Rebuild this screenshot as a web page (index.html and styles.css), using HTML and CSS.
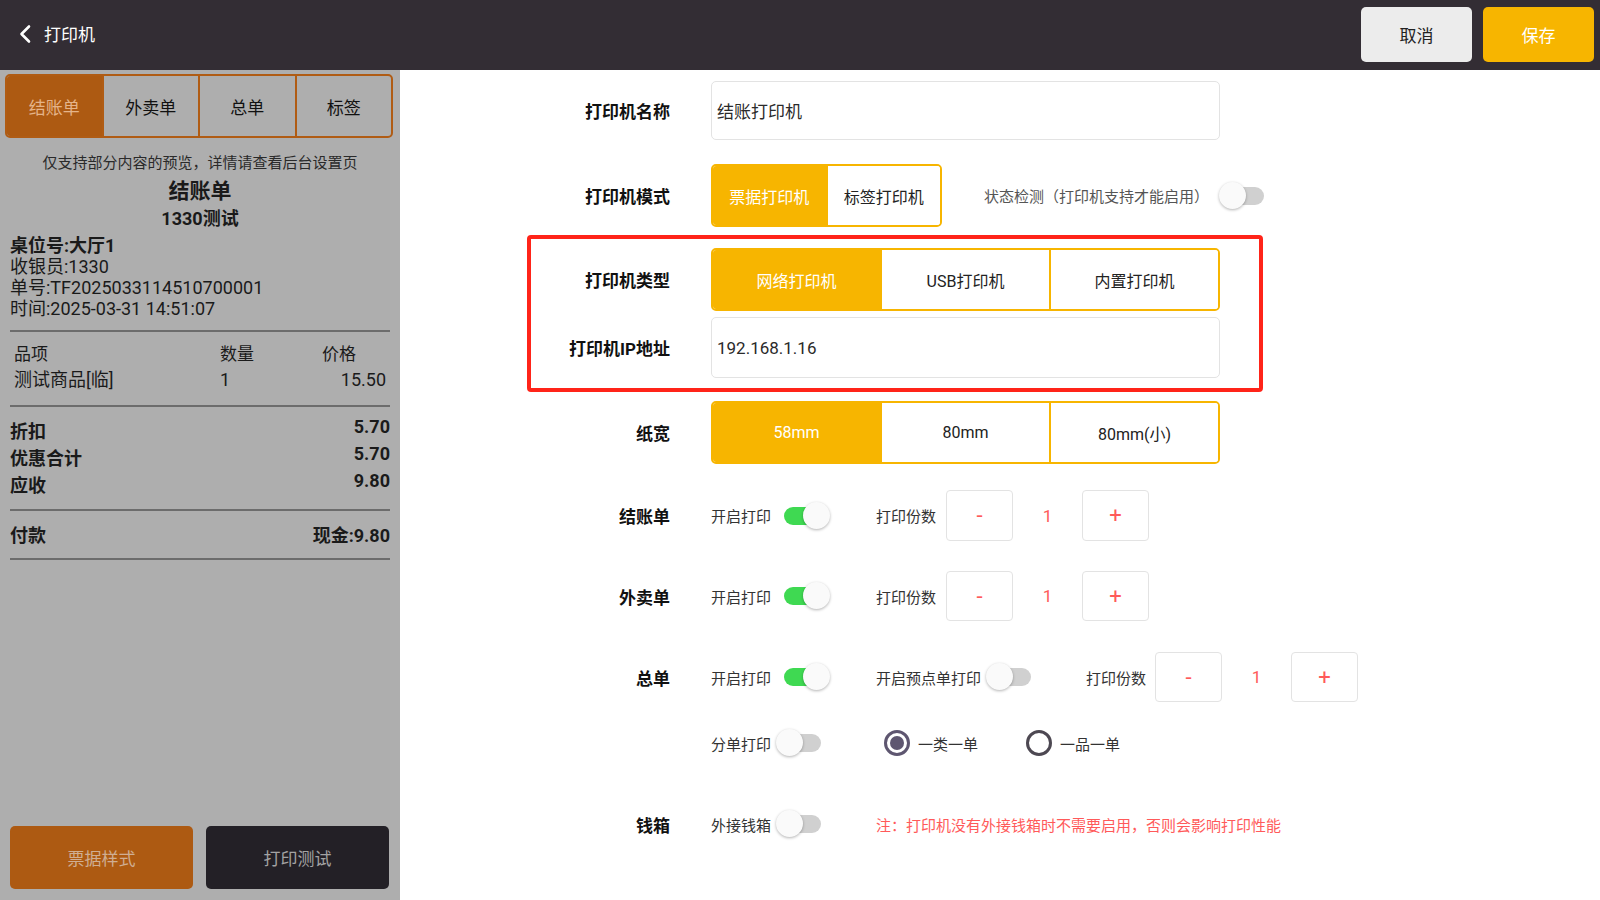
FILE: index.html
```html
<!DOCTYPE html>
<html lang="zh-CN">
<head>
    <meta charset="UTF-8">
    <meta name="viewport" content="width=device-width, initial-scale=1.0">
    <title>打印机</title>
    <link rel="stylesheet" href="styles.css">
</head>
<body>
    <div class="topbar">
        <div class="topbar-title">
            <svg class="back-icon" viewBox="0 0 14 20" width="14" height="20">
                <path d="M11 2.5 L3.5 10 L11 17.5" fill="none" stroke="#fff" stroke-width="2.6" stroke-linecap="round" stroke-linejoin="round"/>
            </svg>
            <span>打印机</span>
        </div>
        <div class="topbar-actions">
            <button class="btn btn-cancel">取消</button>
            <button class="btn btn-save">保存</button>
        </div>
    </div>

    <div class="main">
        <aside class="preview">
            <div class="ticket-tabs">
                <div class="ticket-tab active">结账单</div>
                <div class="ticket-tab">外卖单</div>
                <div class="ticket-tab">总单</div>
                <div class="ticket-tab">标签</div>
            </div>

            <div class="ticket">
                <p class="notice">仅支持部分内容的预览，详情请查看后台设置页</p>
                <h2 class="ticket-title">结账单</h2>
                <h3 class="ticket-shop">1330测试</h3>
                <div class="ticket-info">
                    <p class="strong">桌位号:大厅1</p>
                    <p>收银员:1330</p>
                    <p>单号:TF2025033114510700001</p>
                    <p>时间:2025-03-31 14:51:07</p>
                </div>
                <hr>
                <div class="ticket-items">
                    <div class="item-row head">
                        <span class="c-name">品项</span>
                        <span class="c-qty">数量</span>
                        <span class="c-price">价格</span>
                    </div>
                    <div class="item-row">
                        <span class="c-name">测试商品[临]</span>
                        <span class="c-qty">1</span>
                        <span class="c-price">15.50</span>
                    </div>
                </div>
                <hr>
                <div class="ticket-sums">
                    <div class="sum-row"><span>折扣</span><span class="sum-value">5.70</span></div>
                    <div class="sum-row"><span>优惠合计</span><span class="sum-value">5.70</span></div>
                    <div class="sum-row"><span>应收</span><span class="sum-value">9.80</span></div>
                </div>
                <hr>
                <div class="ticket-pay">
                    <span>付款</span><span>现金:9.80</span>
                </div>
                <hr>
            </div>

            <div class="preview-actions">
                <button class="pbtn pbtn-style">票据样式</button>
                <button class="pbtn pbtn-test">打印测试</button>
            </div>
        </aside>

        <section class="form">
            <div class="row row-name">
                <div class="row-label">打印机名称</div>
                <div class="text-input">结账打印机</div>
            </div>

            <div class="row row-mode">
                <div class="row-label">打印机模式</div>
                <div class="segment segment-2">
                    <div class="segment-item active">票据打印机</div>
                    <div class="segment-item">标签打印机</div>
                </div>
                <div class="status-check">
                    状态检测（打印机支持才能启用）
                    <span class="switch"></span>
                </div>
            </div>

            <div class="row row-type">
                <div class="row-label">打印机类型</div>
                <div class="segment">
                    <div class="segment-item active">网络打印机</div>
                    <div class="segment-item">USB打印机</div>
                    <div class="segment-item">内置打印机</div>
                </div>
            </div>

            <div class="row row-ip">
                <div class="row-label">打印机IP地址</div>
                <div class="text-input">192.168.1.16</div>
            </div>

            <div class="row row-paper">
                <div class="row-label">纸宽</div>
                <div class="segment">
                    <div class="segment-item active">58mm</div>
                    <div class="segment-item">80mm</div>
                    <div class="segment-item">80mm(小)</div>
                </div>
            </div>

            <div class="row row-bill">
                <div class="row-label">结账单</div>
                <div class="opt-col1">开启打印<span class="switch on"></span></div>
                <div class="opt">打印份数
                    <div class="stepper">
                        <div class="step-btn">-</div>
                        <div class="step-value">1</div>
                        <div class="step-btn">+</div>
                    </div>
                </div>
            </div>

            <div class="row row-takeout">
                <div class="row-label">外卖单</div>
                <div class="opt-col1">开启打印<span class="switch on"></span></div>
                <div class="opt">打印份数
                    <div class="stepper">
                        <div class="step-btn">-</div>
                        <div class="step-value">1</div>
                        <div class="step-btn">+</div>
                    </div>
                </div>
            </div>

            <div class="row row-total">
                <div class="row-label">总单</div>
                <div class="opt-col1">开启打印<span class="switch on"></span></div>
                <div class="opt-col2">开启预点单打印<span class="switch"></span></div>
                <div class="opt">打印份数
                    <div class="stepper stepper-tight">
                        <div class="step-btn">-</div>
                        <div class="step-value">1</div>
                        <div class="step-btn">+</div>
                    </div>
                </div>
            </div>

            <div class="row row-split">
                <div class="row-label"></div>
                <div class="opt-col1">分单打印<span class="switch"></span></div>
                <div class="radio-group">
                    <div class="radio-option"><span class="radio checked"></span>一类一单</div>
                    <div class="radio-option"><span class="radio"></span>一品一单</div>
                </div>
            </div>

            <div class="row row-cash">
                <div class="row-label">钱箱</div>
                <div class="opt-col1">外接钱箱<span class="switch"></span></div>
                <div class="cash-note">注：打印机没有外接钱箱时不需要启用，否则会影响打印性能</div>
            </div>

            <div class="highlight"></div>
        </section>
    </div>
</body>
</html>
```

FILE: styles.css
```css
:root {
    --yellow: #f7b500;
    --orange: #ad5a12;
    --dark: #332d34;
    --red-text: #ff5a5a;
    --border-light: #e3e3e3;
}

* {
    margin: 0;
    padding: 0;
    box-sizing: border-box;
}

body {
    width: 1600px;
    height: 900px;
    overflow: hidden;
    font-family: Roboto, "Noto Sans CJK SC", sans-serif;
    color: #222;
    background: #fff;
}

button {
    font-family: inherit;
    border: none;
    cursor: pointer;
}

/* top bar */
.topbar {
    height: 70px;
    background: var(--dark);
    display: flex;
    align-items: center;
    justify-content: space-between;
    padding: 0 6px 0 18px;
}

.topbar-title {
    display: flex;
    align-items: center;
    padding-bottom: 3px;
    color: #fff;
    font-size: 17px;
}

.back-icon {
    margin-right: 12px;
}

.topbar-actions {
    display: flex;
    gap: 11px;
    padding-bottom: 1px;
}

.btn {
    width: 111px;
    height: 55px;
    border-radius: 5px;
    font-size: 17px;
}

.btn-cancel {
    background: #ececec;
    color: #222;
}

.btn-save {
    background: var(--yellow);
    color: #fff;
}

.main {
    display: flex;
    height: 830px;
}

/* left preview */
.preview {
    width: 400px;
    background: #aeaeae;
    display: flex;
    flex-direction: column;
}

.ticket-tabs {
    display: flex;
    height: 64px;
    margin: 4px 7px 0 5px;
    border: 2px solid #b05c14;
    border-radius: 5px;
    overflow: hidden;
}

.ticket-tab {
    flex: 1;
    display: flex;
    align-items: center;
    justify-content: center;
    font-size: 17px;
    color: #111;
    border-left: 2px solid #b05c14;
}

.ticket-tab:first-child {
    border-left: none;
}

.ticket-tab.active {
    background: var(--orange);
    color: #e4b48a;
}

.ticket {
    padding: 0 10px;
    color: #1a1a1a;
}

.notice {
    margin-top: 15px;
    font-size: 15px;
    line-height: 20px;
    text-align: center;
    color: #2a2a2a;
}

.ticket-title {
    margin-top: 5px;
    font-size: 21px;
    line-height: 26px;
    text-align: center;
}

.ticket-shop {
    margin-top: 3px;
    font-size: 18px;
    line-height: 24px;
    text-align: center;
}

.ticket-info {
    margin-top: 4px;
    font-size: 18px;
    line-height: 21px;
}

.ticket-info .strong {
    font-weight: 700;
}

.ticket hr {
    border: none;
    height: 2px;
    background: #6c6c6c;
}

.ticket-info + hr {
    margin-top: 11px;
}

.ticket-items {
    margin-top: 9px;
    font-size: 18px;
    line-height: 26px;
}

.ticket-items + hr {
    margin-top: 12px;
}

.item-row {
    display: flex;
    padding: 0 4px;
}

.item-row.head {
    font-size: 17px;
}

.c-name {
    width: 206px;
}

.c-qty {
    flex: 1;
}

.item-row.head .c-price {
    padding-right: 30px;
}

.ticket-sums {
    margin-top: 11px;
    font-size: 18px;
    font-weight: 700;
}

.ticket-sums + hr {
    margin-top: 10px;
}

.sum-row {
    display: flex;
    justify-content: space-between;
    align-items: flex-start;
    line-height: 27px;
}

.sum-value {
    line-height: 17px;
}

.ticket-pay {
    margin-top: 11px;
    display: flex;
    justify-content: space-between;
    font-size: 18px;
    font-weight: 700;
    line-height: 27px;
}

.ticket-pay + hr {
    margin-top: 9px;
}

.preview-actions {
    margin-top: auto;
    display: flex;
    gap: 13px;
    padding: 0 11px 11px 10px;
}

.pbtn {
    flex: 1;
    height: 63px;
    border-radius: 5px;
    font-size: 17px;
}

.pbtn-style {
    background: var(--orange);
    color: #cfae93;
}

.pbtn-test {
    background: #232026;
    color: #a3a3a3;
}

/* right form */
.form {
    flex: 1;
    position: relative;
    background: #fff;
}

.row {
    display: flex;
    align-items: center;
    font-size: 15px;
    color: #333;
}

.row-label {
    width: 270px;
    margin-right: 41px;
    text-align: right;
    font-size: 17px;
    font-weight: 700;
    color: #111;
}

.row-name { margin-top: 11px; height: 59px; }
.row-mode { margin-top: 24px; height: 63px; }
.row-type { margin-top: 21px; height: 63px; }
.row-ip { margin-top: 6px; height: 61px; }
.row-paper { margin-top: 23px; height: 63px; }
.row-bill { margin-top: 26px; height: 51px; }
.row-takeout { margin-top: 30px; height: 50px; }
.row-total { margin-top: 31px; height: 50px; }
.row-split { margin-top: 21px; height: 40px; }
.row-cash { margin-top: 41px; height: 40px; }

.text-input {
    width: 509px;
    height: 100%;
    border: 1px solid var(--border-light);
    border-radius: 5px;
    padding-left: 5px;
    display: flex;
    align-items: center;
    font-size: 17px;
    color: #2a2a2a;
}

.segment {
    display: flex;
    width: 509px;
    height: 63px;
    border: 2px solid var(--yellow);
    border-radius: 5px;
    overflow: hidden;
}

.segment-2 {
    width: 231px;
}

.segment-item {
    flex: 1;
    display: flex;
    align-items: center;
    justify-content: center;
    font-size: 16px;
    color: #222;
    background: #fff;
    border-left: 2px solid var(--yellow);
}

.segment-item:first-child {
    border-left: none;
}

.segment-item.active {
    background: var(--yellow);
    color: #fff;
}

.status-check {
    display: flex;
    align-items: center;
    margin-left: 42px;
    color: #555;
}

.status-check .switch {
    margin-left: 10px;
}

/* switch */
.switch {
    position: relative;
    display: inline-block;
    flex: none;
    width: 54px;
    height: 28px;
    margin-left: 5px;
}

.switch::before {
    content: '';
    position: absolute;
    left: 5px;
    top: 5px;
    width: 40px;
    height: 18px;
    border-radius: 9px;
    background: #d0d0d0;
}

.switch::after {
    content: '';
    position: absolute;
    left: 0;
    top: 0;
    width: 27px;
    height: 27px;
    border-radius: 50%;
    background: #fafafa;
    box-shadow: 0 1px 3px rgba(0, 0, 0, 0.3);
}

.switch.on::before {
    left: 8px;
    background: #3fd952;
}

.switch.on::after {
    left: 27px;
}

.opt-col1 {
    width: 165px;
    display: flex;
    align-items: center;
}

.opt-col2 {
    width: 210px;
    display: flex;
    align-items: center;
}

.opt {
    display: flex;
    align-items: center;
}

.stepper {
    display: flex;
    align-items: center;
    margin-left: 10px;
}

.stepper-tight {
    margin-left: 9px;
}

.step-btn {
    width: 67px;
    height: 51px;
    border: 1px solid var(--border-light);
    border-radius: 4px;
    display: flex;
    align-items: center;
    justify-content: center;
    font-size: 22px;
    color: var(--red-text);
}

.row-takeout .step-btn,
.row-total .step-btn {
    height: 50px;
}

.step-value {
    width: 69px;
    text-align: center;
    font-size: 17px;
    color: var(--red-text);
}

.radio-group {
    display: flex;
    align-items: center;
    padding-left: 8px;
}

.radio-option {
    display: flex;
    align-items: center;
    gap: 8px;
    margin-right: 48px;
}

.radio {
    width: 26px;
    height: 26px;
    border-radius: 50%;
    border: 3px solid #4d4852;
    display: flex;
    align-items: center;
    justify-content: center;
}

.radio.checked {
    border-color: #5e5670;
}

.radio.checked::after {
    content: '';
    width: 14px;
    height: 14px;
    border-radius: 50%;
    background: #5e5670;
}

.cash-note {
    color: var(--red-text);
}

/* red annotation frame */
.highlight {
    position: absolute;
    left: 127px;
    top: 165px;
    width: 736px;
    height: 157px;
    border: 4px solid #ff2419;
    border-radius: 4px;
    pointer-events: none;
}
```
